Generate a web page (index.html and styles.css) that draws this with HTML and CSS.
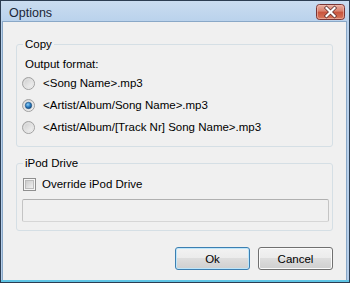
FILE: index.html
```html
<!DOCTYPE html>
<html>
<head>
<meta charset="utf-8">
<link rel="stylesheet" href="styles.css">
</head>
<body>
<div class="window">
  <div class="titlebar">
    <span class="title">Options</span>
    <svg class="close" width="29" height="16" viewBox="0 0 29 16">
      <defs>
        <linearGradient id="cg" x1="0" y1="0" x2="0" y2="1">
          <stop offset="0" stop-color="#eab1a4"/>
          <stop offset="0.45" stop-color="#d9806c"/>
          <stop offset="0.5" stop-color="#c8533c"/>
          <stop offset="1" stop-color="#d97a5f"/>
        </linearGradient>
      </defs>
      <rect x="0.5" y="0.5" width="28" height="15" rx="3" fill="url(#cg)" stroke="#7a3535"/>
      <rect x="1.5" y="1.5" width="26" height="13" rx="2" fill="none" stroke="#f1c2b6" stroke-opacity="0.6"/>
      <path d="M10.5 4 L18.5 12 M18.5 4 L10.5 12" stroke="#5a2a2a" stroke-width="3.6" stroke-linecap="square"/>
      <path d="M10.5 4 L18.5 12 M18.5 4 L10.5 12" stroke="#ffffff" stroke-width="2.2" stroke-linecap="square"/>
    </svg>
  </div>
  <div class="client">
    <fieldset class="group copy">
      <legend>Copy</legend>
      <div class="label">Output format:</div>
      <div class="row">
        <svg class="radio" width="13" height="13" viewBox="0 0 13 13">
          <defs>
            <linearGradient id="rg" x1="0" y1="0" x2="1" y2="1">
              <stop offset="0" stop-color="#c8c8c8"/>
              <stop offset="1" stop-color="#fbfbfb"/>
            </linearGradient>
            <radialGradient id="dot" cx="0.4" cy="0.35" r="0.7">
              <stop offset="0" stop-color="#8fd0f7"/>
              <stop offset="0.55" stop-color="#2a7cc1"/>
              <stop offset="1" stop-color="#0d3f70"/>
            </radialGradient>
          </defs>
          <circle cx="6.5" cy="6.5" r="6" fill="url(#rg)" stroke="#a0a0a0"/>
          <circle cx="6.5" cy="6.5" r="4.5" fill="none" stroke="#e3e3e3"/>
        </svg>
        <span>&lt;Song Name&gt;.mp3</span>
      </div>
      <div class="row">
        <svg class="radio" width="13" height="13" viewBox="0 0 13 13">
          <circle cx="6.5" cy="6.5" r="6" fill="url(#rg)" stroke="#a0a0a0"/>
          <circle cx="6.5" cy="6.5" r="4.5" fill="none" stroke="#e3e3e3"/>
          <circle cx="6.5" cy="6.5" r="3.2" fill="url(#dot)" stroke="#1c4f80" stroke-width="0.6"/>
        </svg>
        <span>&lt;Artist/Album/Song Name&gt;.mp3</span>
      </div>
      <div class="row">
        <svg class="radio" width="13" height="13" viewBox="0 0 13 13">
          <circle cx="6.5" cy="6.5" r="6" fill="url(#rg)" stroke="#a0a0a0"/>
          <circle cx="6.5" cy="6.5" r="4.5" fill="none" stroke="#e3e3e3"/>
        </svg>
        <span>&lt;Artist/Album/[Track Nr] Song Name&gt;.mp3</span>
      </div>
    </fieldset>
    <fieldset class="group ipod">
      <legend>iPod Drive</legend>
      <div class="row">
        <svg class="check" width="13" height="13" viewBox="0 0 13 13">
          <defs>
            <linearGradient id="kg" x1="0" y1="0" x2="1" y2="1">
              <stop offset="0" stop-color="#c9c9c9"/>
              <stop offset="1" stop-color="#f3f3f3"/>
            </linearGradient>
          </defs>
          <rect x="0.5" y="0.5" width="12" height="12" fill="#f6f6f6" stroke="#8f8f8f"/>
          <rect x="2.5" y="2.5" width="8" height="8" fill="url(#kg)" stroke="#bcbcbc"/>
        </svg>
        <span>Override iPod Drive</span>
      </div>
      <div class="textbox"></div>
    </fieldset>
    <div class="buttons">
      <button class="btn default">Ok</button>
      <button class="btn">Cancel</button>
    </div>
  </div>
</div>
</body>
</html>
```

FILE: styles.css
```css
html, body {
  margin: 0;
  padding: 0;
  background: #ffffff;
}

body {
  font-family: "Liberation Sans", Arial, sans-serif;
  font-size: 11.5px;
  color: #000000;
}

.window {
  width: 350px;
  height: 283px;
  box-sizing: border-box;
  border: 1px solid #2c3d52;
  padding: 0 2px 2px 1px;
  background: linear-gradient(to bottom, #cadcf0 0, #bad2ec 20px, #b4cde9 100%);
  box-shadow: inset 0 -2px 0 #5ec4e4;
  display: flex;
  flex-direction: column;
}

.titlebar {
  height: 20px;
  display: flex;
  justify-content: space-between;
  align-items: flex-start;
  flex: none;
}

.title {
  padding: 4px 0 0 7px;
  line-height: 16px;
  font-size: 12.5px;
  color: #1b2636;
}

.close {
  display: block;
  margin: 3px 2px 0 0;
}

.client {
  flex: 1;
  background: #f0f0f0;
  border: 1px solid #8aa8c7;
  border-bottom: none;
  display: flex;
  flex-direction: column;
}

.group {
  margin: 0 13px;
  border: 1px solid #d5dfe5;
  border-radius: 3px;
  min-width: 0;
}

.group legend {
  padding: 0 2px;
  line-height: 17px;
  font-size: 11.5px;
}

.copy {
  margin-top: 14px;
  padding: 3px 8px 8px 8px;
}

.copy legend {
  margin-left: -2px;
}

.label {
  line-height: 16px;
}

.row {
  height: 22px;
  display: flex;
  align-items: center;
}

.radio {
  display: block;
  margin-left: -3px;
  margin-right: 8px;
  flex: none;
}

.ipod {
  margin-top: 8px;
  padding: 1px 3px 8px 6px;
}

.check {
  display: block;
  margin-right: 6px;
  flex: none;
}

.textbox {
  margin: 4px 0 0 -1px;
  height: 23px;
  box-sizing: border-box;
  border: 1px solid #c4c4c4;
  border-top-color: #b0b0b0;
  border-bottom-color: #d6d6d6;
  border-radius: 2px;
  background: #f0f0f0;
}

.buttons {
  margin: 16px 13px 0 0;
  display: flex;
  justify-content: flex-end;
  gap: 8px;
}

.btn {
  width: 75px;
  height: 23px;
  box-sizing: border-box;
  padding: 0;
  font-family: inherit;
  font-size: 11.5px;
  color: #000000;
  border: 1px solid #707070;
  border-radius: 3px;
  background: linear-gradient(to bottom, #f2f2f2 0%, #ebebeb 50%, #dddddd 50%, #cfcfcf 100%);
  box-shadow: inset 0 0 0 1px #fbfbfb;
}

.btn.default {
  border-color: #3c7fb1;
  box-shadow: inset 0 0 0 1px #bde6fb;
}
```
